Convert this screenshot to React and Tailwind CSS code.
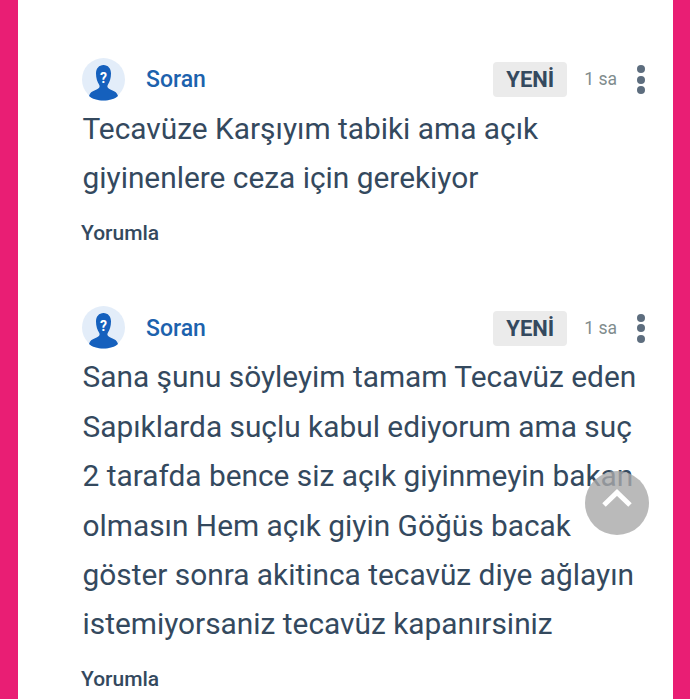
import React from 'react';

const yorumlar = [
  {
    id: 1,
    satirlar: ['Tecavüze Karşıyım tabiki ama açık', 'giyinenlere ceza için gerekiyor'],
  },
  {
    id: 2,
    satirlar: [
      'Sana şunu söyleyim tamam Tecavüz eden',
      'Sapıklarda suçlu kabul ediyorum ama suç',
      '2 tarafda bence siz açık giyinmeyin bakan',
      'olmasın Hem açık giyin Göğüs bacak',
      'göster sonra akitinca tecavüz diye ağlayın',
      'istemiyorsaniz tecavüz kapanırsiniz',
    ],
  },
];

function Avatar() {
  return (
    <svg width="43" height="43" viewBox="0 0 43 43" className="shrink-0">
      <circle cx="21.5" cy="21.5" r="21.5" fill="#e3edf9" />
      <path
        d="M21.5 7C17 7 14 10.5 14 15.5c0 4.5 1.3 8.5 3 11 .6 1 .8 1.8.4 2.8-.5 1.2-2 2-4.4 3-3 1.2-5.2 2.5-6 5.7C10 40.8 15.5 42.5 21.5 42.5s11.5-1.7 14.5-4.5c-.8-3.2-3-4.5-6-5.7-2.4-1-3.9-1.8-4.4-3-.4-1-.2-1.8.4-2.8 1.7-2.5 3-6.5 3-11C29 10.5 26 7 21.5 7z"
        fill="#1560bd"
      />
      <text x="21.5" y="25" textAnchor="middle" fontSize="14" fontWeight="700" fill="#ffffff" fontFamily="Roboto, sans-serif">?</text>
    </svg>
  );
}

function Yorum({ satirlar }) {
  return (
    <div className="mb-[60px]">
      <div className="flex items-center h-[42px] pl-[64px] pr-[28px]">
        <Avatar />
        <span className="ml-[21px] mt-[2px] text-[23px] font-medium text-[#1c62ad]">Soran</span>
        <span className="ml-auto mt-[1px] w-[74px] h-[35px] flex items-center justify-center rounded bg-[#ebebeb] text-[22px] font-bold text-[#34495e]">YENİ</span>
        <span className="ml-[17px] mt-[1px] text-[17.5px] text-[#7f8c8d]">1 sa</span>
        <div className="ml-[20px] mt-[1px] flex flex-col gap-[2.5px]">
          <span className="w-[8px] h-[8px] rounded-full bg-[#5d6d7e]" />
          <span className="w-[8px] h-[8px] rounded-full bg-[#5d6d7e]" />
          <span className="w-[8px] h-[8px] rounded-full bg-[#5d6d7e]" />
        </div>
      </div>
      <div className="mt-[3.5px] pl-[64.5px] text-[29.85px] leading-[49.4px] text-[#34495e] whitespace-nowrap">
        {satirlar.map((s) => (
          <div key={s}>{s}</div>
        ))}
      </div>
      <div className="mt-[16.5px] pl-[63px] text-[21px] leading-[28px] font-medium text-[#34495e]">Yorumla</div>
    </div>
  );
}

export default function App() {
  return (
    <div className="relative h-[699px] overflow-hidden bg-[#e91e74] pl-[18px] pr-[17px] font-['Roboto',sans-serif]">
      <div className="h-full bg-white pt-[58px]">
        {yorumlar.map((y) => (
          <Yorum key={y.id} satirlar={y.satirlar} />
        ))}
      </div>
      <div className="absolute left-[585px] top-[471px] w-[64px] h-[64px] rounded-full bg-[#a9a9a9]/80 flex items-center justify-center">
        <svg width="32" height="20" viewBox="0 0 32 20" className="mb-[10px]">
          <path d="M3 17 L16 4.5 L29 17" fill="none" stroke="#ffffff" strokeWidth="5" />
        </svg>
      </div>
    </div>
  );
}
